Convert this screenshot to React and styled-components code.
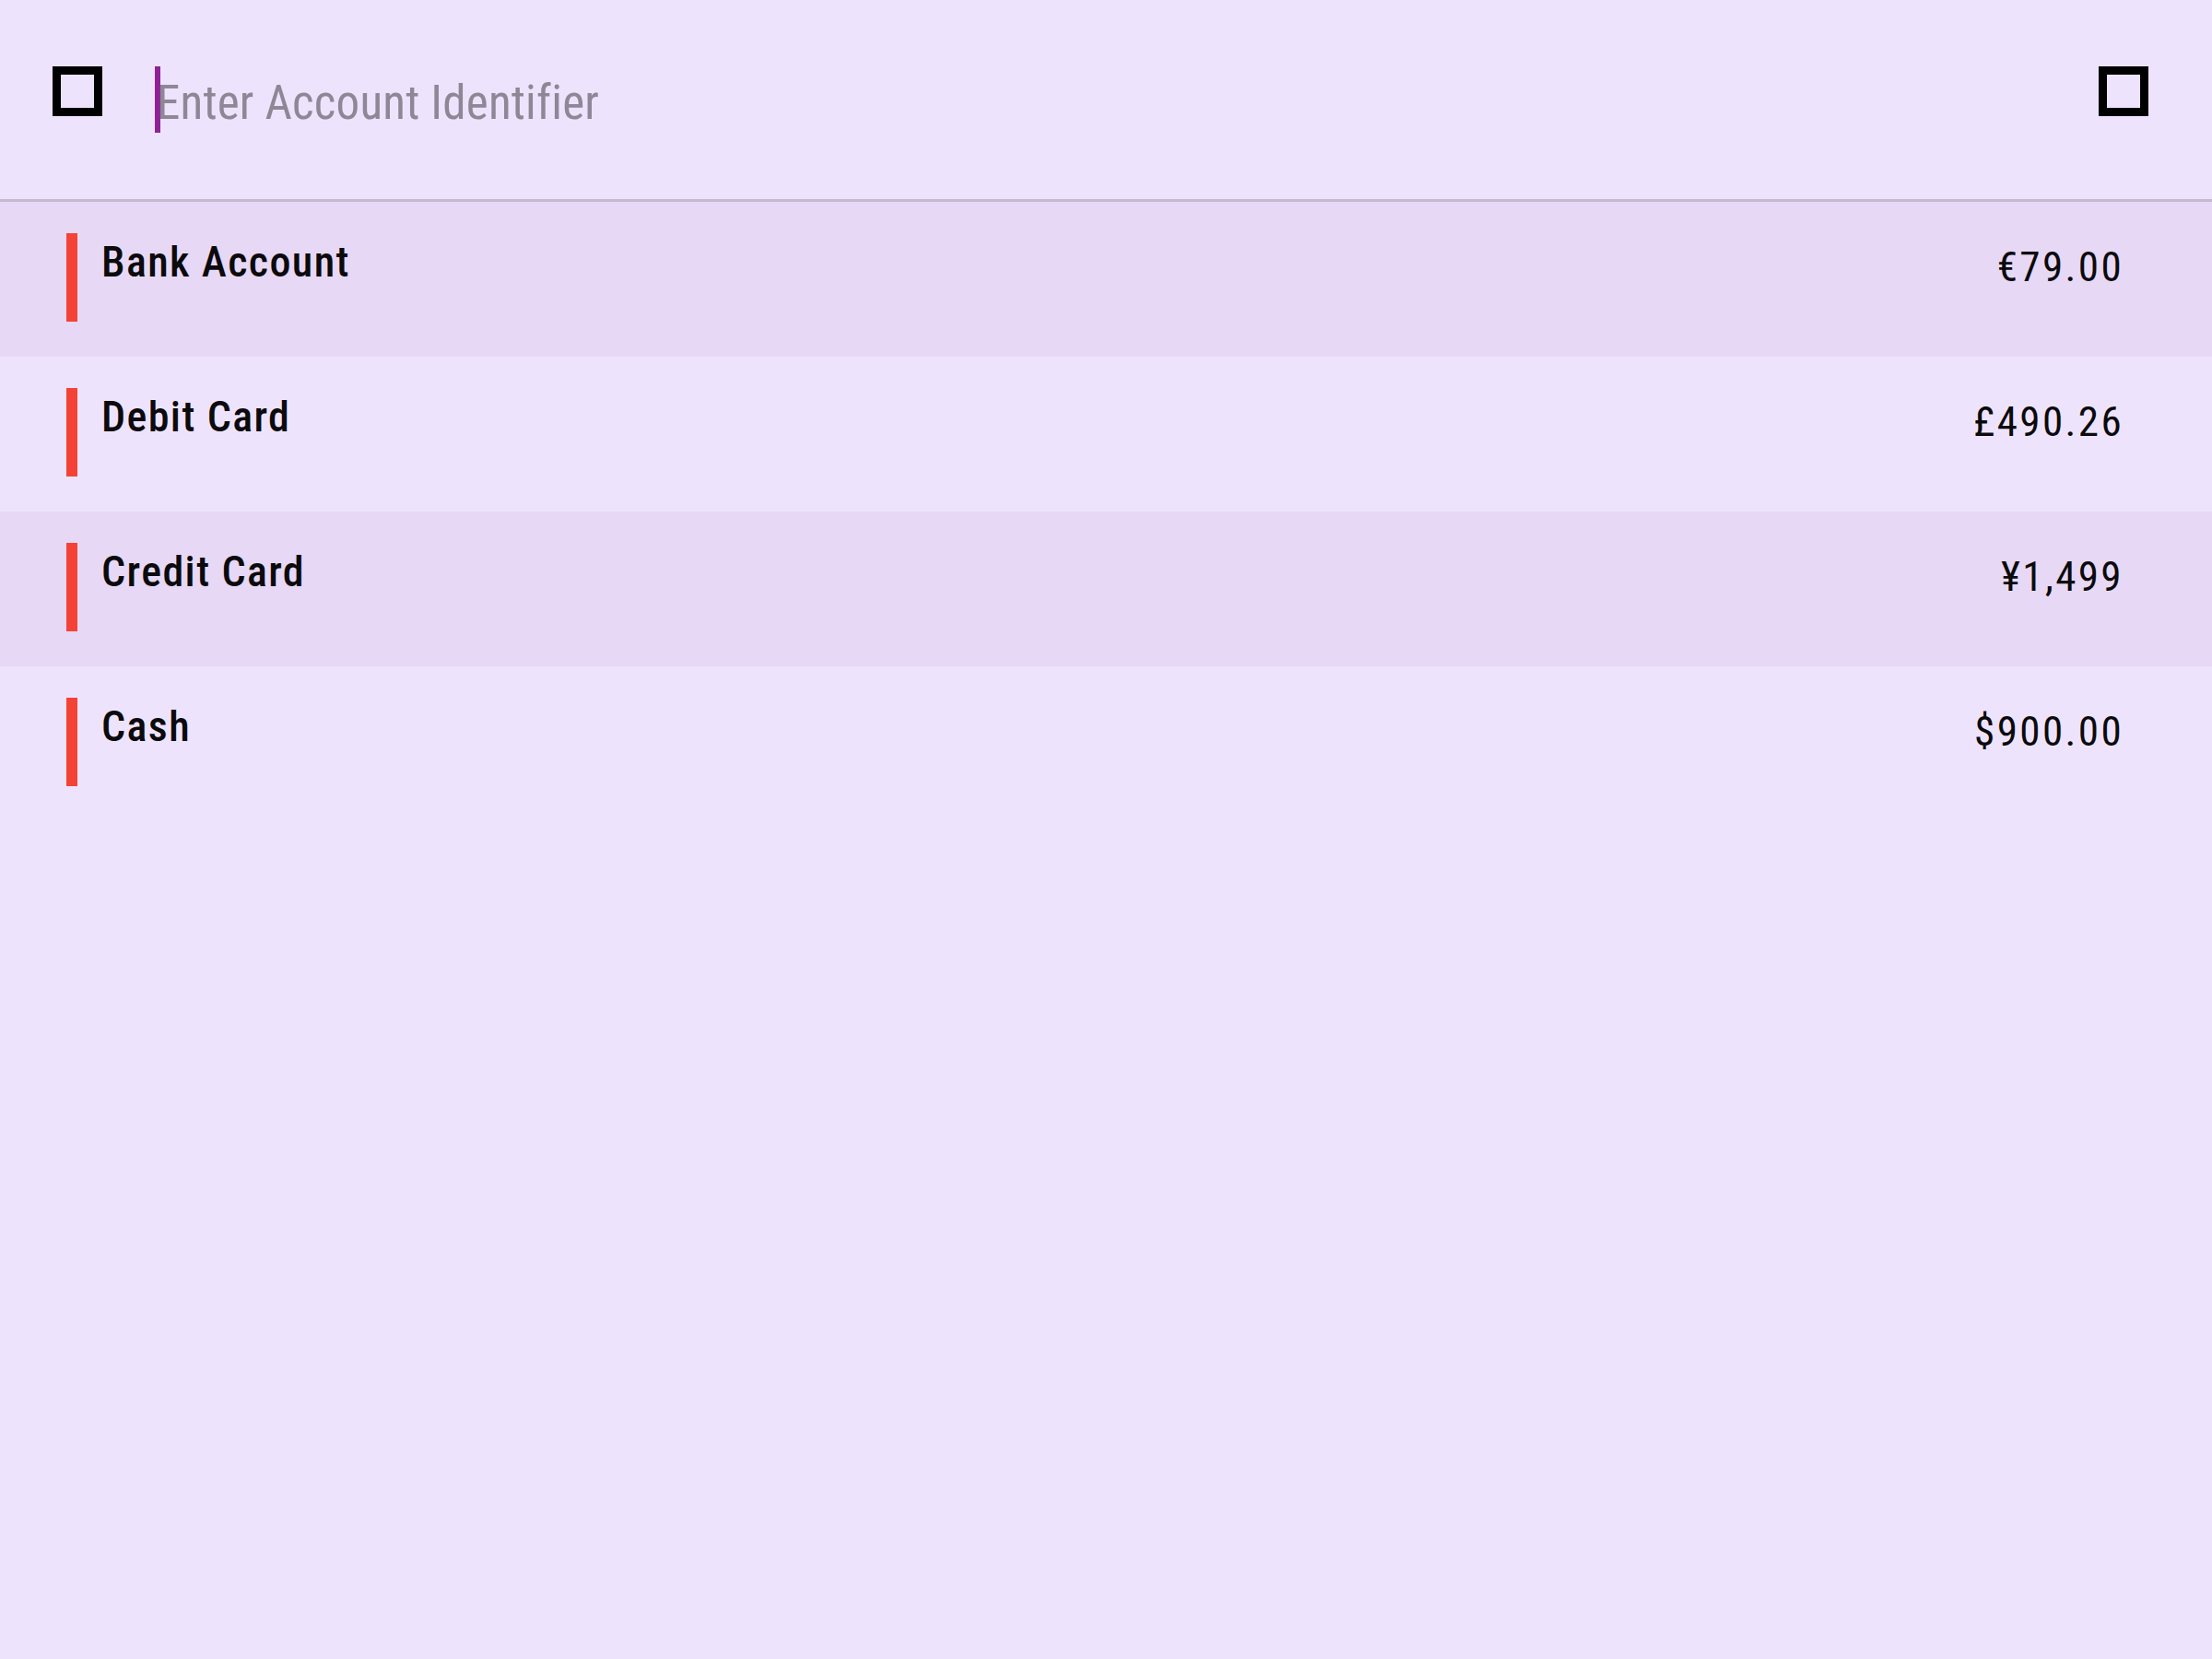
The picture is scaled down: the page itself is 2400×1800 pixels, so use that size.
import React from "react";
import styled, { createGlobalStyle } from "styled-components";

const accounts = [
  { name: "Bank Account", amount: "€79.00" },
  { name: "Debit Card", amount: "£490.26" },
  { name: "Credit Card", amount: "¥1,499" },
  { name: "Cash", amount: "$900.00" },
];

const App = () => {
  return (
    <Page>
      <GlobalStyle />
      <Header>
        <IconBox aria-label="menu" />
        <Field>
          <Caret />
          <Placeholder>Enter Account Identifier</Placeholder>
        </Field>
        <IconBox aria-label="search" />
      </Header>
      <List>
        {accounts.map((account, i) => (
          <Row key={account.name} $shaded={i % 2 === 0}>
            <Marker />
            <Name>{account.name}</Name>
            <Amount>{account.amount}</Amount>
          </Row>
        ))}
      </List>
    </Page>
  );
};

const GlobalStyle = createGlobalStyle`
  html, body {
    margin: 0;
    padding: 0;
    background: #eee3fc;
  }

  body {
    font-family: "Roboto Condensed", Roboto, "Liberation Sans", sans-serif;
    color: #0b0a0d;
  }
`;

const Page = styled.div`
  min-height: 1800px;
  background: #eee3fc;
  display: flex;
  flex-direction: column;
`;

const Header = styled.header`
  height: 219px;
  box-sizing: border-box;
  display: flex;
  align-items: flex-start;
  gap: 57px;
  padding: 72px 69px 0 57px;
  border-bottom: 3px solid #c5b9d0;
`;

const IconBox = styled.button`
  width: 54px;
  height: 54px;
  box-sizing: border-box;
  border: 9px solid #000;
  background: transparent;
  padding: 0;
  flex-shrink: 0;
`;

const Field = styled.div`
  flex: 1;
  display: flex;
  align-items: flex-start;
`;

const Caret = styled.span`
  width: 6px;
  height: 72px;
  background: #8f2196;
  flex-shrink: 0;
`;

const Placeholder = styled.span`
  margin-left: -4px;
  margin-top: 10px;
  font-size: 51px;
  line-height: 60px;
  letter-spacing: 0.2px;
  color: #8f8696;
`;

const List = styled.div`
  display: flex;
  flex-direction: column;
`;

const Row = styled.div`
  height: 168px;
  box-sizing: border-box;
  display: flex;
  align-items: flex-start;
  padding: 34px 96px 0 72px;
  background: ${(p) => (p.$shaded ? "#e7d8f5" : "#eee3fc")};
`;

const Marker = styled.span`
  width: 12px;
  height: 96px;
  background: #f44336;
  flex-shrink: 0;
`;

const Name = styled.div`
  flex: 1;
  margin: 4px 0 0 26px;
  font-size: 46px;
  line-height: 54px;
  font-weight: 500;
  letter-spacing: 1.4px;
`;

const Amount = styled.div`
  margin-top: 10px;
  font-size: 45px;
  line-height: 54px;
  letter-spacing: 2.4px;
`;

export default App;
